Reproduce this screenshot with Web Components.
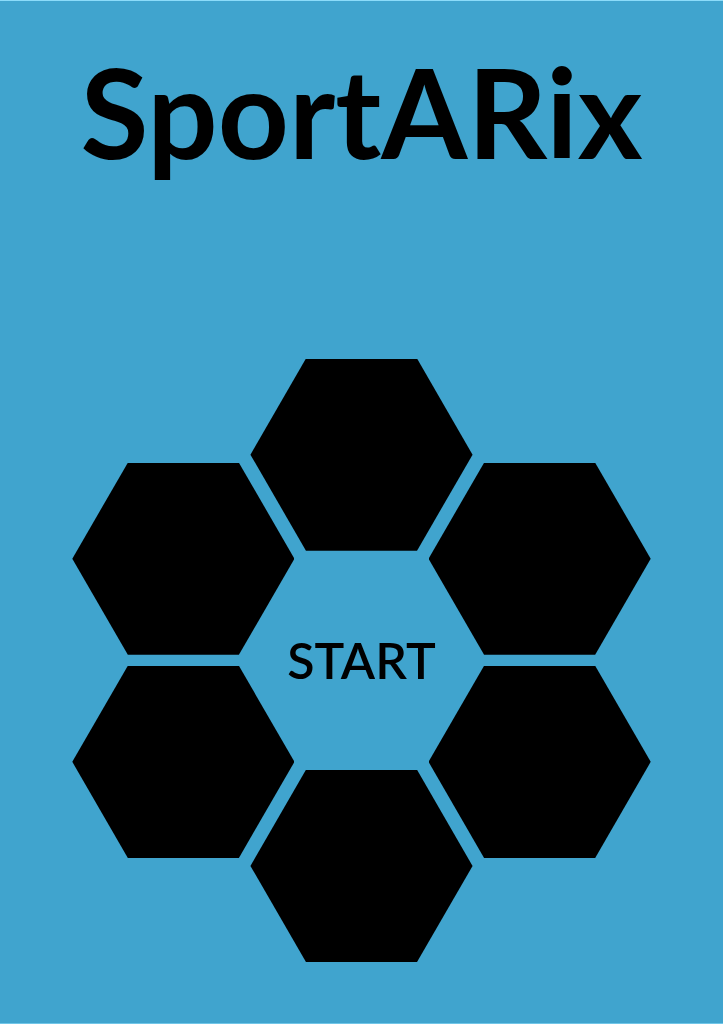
<!DOCTYPE html>
<html lang="en">
<head>
<meta charset="utf-8">
<meta name="viewport" content="width=device-width, initial-scale=1">
<title>SportARix</title>
<style>
body { margin: 0; background: #40a4ce; font-family: Lato, "Open Sans", sans-serif; color: #000; }
</style>
</head>
<body>
<sport-screen>
  <sport-title slot="title">SportARix</sport-title>
  <hex-ring>
    <hex-tile slot="top"></hex-tile>
    <hex-tile slot="top-left"></hex-tile>
    <hex-tile slot="top-right"></hex-tile>
    <start-button slot="center">START</start-button>
    <hex-tile slot="bottom-left"></hex-tile>
    <hex-tile slot="bottom-right"></hex-tile>
    <hex-tile slot="bottom"></hex-tile>
  </hex-ring>
</sport-screen>
<script>
function define(name, html) {
  const template = document.createElement('template');
  template.innerHTML = html;
  customElements.define(name, class extends HTMLElement {
    constructor() {
      super();
      this.attachShadow({ mode: 'open' }).append(template.content.cloneNode(true));
    }
  });
}

define('sport-screen', `
  <style>
    :host { display: flex; flex-direction: column; justify-content: space-between; box-sizing: border-box;
      min-height: 100vh; padding: 36px 10% 61px; border-top: 1px solid #8cdcfa; border-bottom: 1px solid #70c6e8; }
  </style>
  <slot name="title"></slot>
  <main><slot></slot></main>`);

define('sport-title', `
  <style>
    :host { display: flex; justify-content: center; }
    h1 { margin: 0; font-size: 124px; line-height: 148px; font-weight: 700; white-space: nowrap; }
  </style>
  <h1><slot></slot></h1>`);

// Columns and rows overlap so that neighbouring hexagons interlock.
define('hex-ring', `
  <style>
    :host { display: grid; aspect-ratio: 578 / 603;
      grid-template-columns: 178fr 44fr 134fr 44fr 178fr;
      grid-template-rows: 104fr 88fr 104fr 11fr 104fr 88fr 104fr; }
    [name="top"]::slotted(*) { grid-area: 1 / 2 / 3 / 5; }
    [name="top-left"]::slotted(*) { grid-area: 2 / 1 / 4 / 3; }
    [name="top-right"]::slotted(*) { grid-area: 2 / 4 / 4 / 6; }
    [name="center"]::slotted(*) { grid-area: 3 / 3 / 6 / 4; }
    [name="bottom-left"]::slotted(*) { grid-area: 5 / 1 / 7 / 3; }
    [name="bottom-right"]::slotted(*) { grid-area: 5 / 4 / 7 / 6; }
    [name="bottom"]::slotted(*) { grid-area: 6 / 2 / 8 / 5; }
  </style>
  <slot name="top"></slot>
  <slot name="top-left"></slot>
  <slot name="top-right"></slot>
  <slot name="center"></slot>
  <slot name="bottom-left"></slot>
  <slot name="bottom-right"></slot>
  <slot name="bottom"></slot>`);

define('hex-tile', `
  <style>
    :host { display: block; background: #000;
      clip-path: polygon(25% 0, 75% 0, 100% 50%, 75% 100%, 25% 100%, 0 50%); }
  </style>`);

define('start-button', `
  <style>
    :host { display: flex; align-items: center; justify-content: center; min-width: 0; }
    button { flex: none; margin: 0; padding: 0; border: 0; background: none; color: inherit; cursor: pointer;
      font: 600 50px/64px Lato, "Open Sans", sans-serif; }
  </style>
  <button type="button"><slot></slot></button>`);
</script>
</body>
</html>
